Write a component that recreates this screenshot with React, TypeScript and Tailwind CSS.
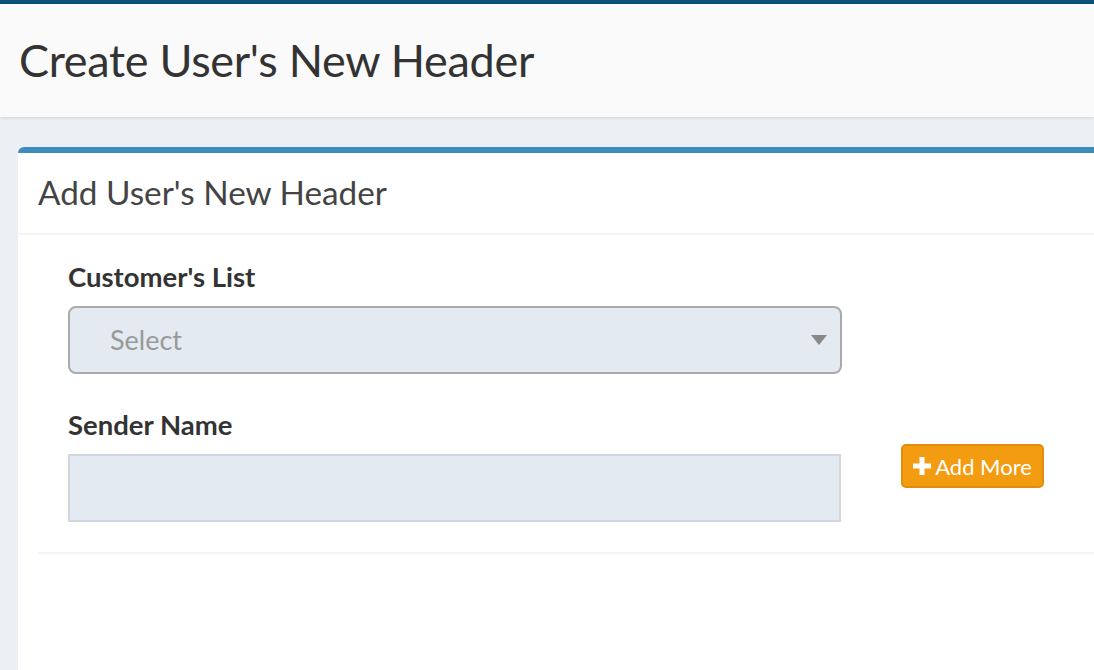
import React from "react";

export default function App() {
  const font = { fontFamily: "Lato, 'Open Sans', sans-serif" };
  return (
    <div className="w-[1094px] h-[670px] overflow-hidden bg-[#ecf0f5] flex flex-col" style={font}>
      <div className="h-[4px] bg-[#0a5077] shrink-0" />
      <div className="h-[113px] shrink-0 bg-[#fafafa] shadow-[0_1px_3px_rgba(0,0,0,0.12)] flex items-center pl-[19px] relative z-10">
        <h1 className="text-[45px] leading-none text-[#333] font-normal tracking-[-0.3px]">Create User's New Header</h1>
      </div>
      <div className="pt-[30px] pl-[18px] flex-1 flex">
        <div className="flex-1 bg-white border-t-[6px] border-[#3c8dbc] rounded-tl-[6px] flex flex-col">
          <div className="h-[82px] ml-0 border-b-2 border-[#f4f4f4] flex items-center pl-[20px]">
            <h3 className="text-[33.3px] leading-none text-[#444] font-normal">Add User's New Header</h3>
          </div>
          <div className="pl-[20px]">
            <div className="pl-[30px] pt-[25px] pb-[30px] flex items-end border-b-2 border-[#f4f4f4]">
              <div className="w-[774px] flex flex-col">
                <label className="text-[27.5px] font-bold text-[#333] leading-[34px]">Customer's List</label>
                <div className="mt-[12px] h-[68px] bg-[#e3eaf1] border-2 border-[#aaaaaa] rounded-[8px] flex items-center justify-between pl-[40px] pr-[12px]">
                  <span className="text-[27px] text-[#999]">Select</span>
                  <svg width="18" height="12" viewBox="0 0 18 12"><path d="M1 1h16L9 11z" fill="#888" /></svg>
                </div>
                <label className="mt-[34px] text-[27.5px] font-bold text-[#333] leading-[34px]">Sender Name</label>
                <div className="mt-[12px] h-[68px] w-[773px] bg-[#e3eaf1] border-2 border-[#d2d6de]" />
              </div>
              <div className="ml-[59px] mb-[34px]">
                <button className="h-[44px] w-[143px] bg-[#f39c12] border-2 border-[#e08e0b] rounded-[5px] text-white text-[22px] flex items-center justify-center gap-[4px]">
                  <svg width="18" height="18" viewBox="0 0 18 18"><path d="M6.5 0h5v6.5H18v5h-6.5V18h-5v-6.5H0v-5h6.5z" fill="#fff" /></svg>
                  <span>Add More</span>
                </button>
              </div>
            </div>
          </div>
        </div>
      </div>
    </div>
  );
}
